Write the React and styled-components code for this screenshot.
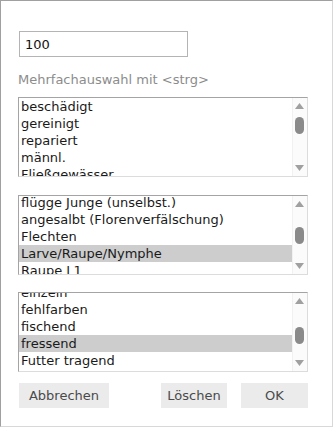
import styled, { createGlobalStyle } from 'styled-components';

const GlobalStyle = createGlobalStyle`
  html, body {
    margin: 0;
    padding: 0;
    background: #ffffff;
  }
  body {
    font-family: 'DejaVu Sans', Verdana, sans-serif;
    font-size: 13px;
    color: #1a1a1a;
  }
`;

const Panel = styled.div`
  box-sizing: border-box;
  width: 333px;
  height: 427px;
  border: 1px solid #a0a0a0;
  border-right-color: #d8d8d8;
  border-bottom-color: #d8d8d8;
  padding: 30px 24px 0 17px;
  display: flex;
  flex-direction: column;
`;

const NumberInput = styled.input`
  box-sizing: border-box;
  width: 169px;
  height: 26px;
  margin-left: 1px;
  border: 1px solid #b4b4b4;
  padding: 0 5px;
  font-family: inherit;
  font-size: 13px;
  color: #111;
  outline: none;
`;

const Hint = styled.div`
  margin-top: 14px;
  line-height: 17px;
  color: #8c8c8c;
`;

const ListBox = styled.div`
  box-sizing: border-box;
  height: 80px;
  margin-top: ${(p) => p.$gap}px;
  border: 1px solid #a4a4a4;
  border-right-color: #dcdcdc;
  border-bottom-color: #dcdcdc;
  display: flex;
  overflow: hidden;
`;

const Items = styled.div`
  flex: 1;
  overflow: hidden;
`;

const ItemsInner = styled.div`
  margin-top: ${(p) => -p.$scroll}px;
`;

const Item = styled.div`
  height: 17px;
  line-height: 17px;
  padding-left: 2px;
  white-space: nowrap;
  background: ${(p) => (p.$selected ? '#cdcdcd' : 'transparent')};
`;

const ScrollBar = styled.div`
  position: relative;
  width: 14px;
  background: #fbfbfb;
  border-left: 1px solid #f1f1f1;
`;

const Arrow = styled.svg`
  position: absolute;
  left: 2px;
  ${(p) => (p.$down ? 'bottom: 5px;' : 'top: 5px;')}
`;

const Thumb = styled.div`
  position: absolute;
  left: 2px;
  width: 9px;
  height: 17px;
  border-radius: 5px;
  background: #8a8a8a;
`;

const Buttons = styled.div`
  margin-top: 11px;
  display: flex;
  align-items: center;
  gap: 14px;
  padding-left: 1px;
`;

const Button = styled.button`
  box-sizing: border-box;
  height: 25px;
  width: ${(p) => p.$width}px;
  padding: 0;
  border: none;
  background: #ebebeb;
  color: #4a4a4a;
  font-family: inherit;
  font-size: 13px;
  text-align: center;
  margin-right: ${(p) => (p.$push ? 'auto' : '0')};
`;

const lists = [
  {
    gap: 9,
    scroll: 0,
    thumb: 19,
    items: ['beschädigt', 'gereinigt', 'repariert', 'männl.', 'Fließgewässer'],
  },
  {
    gap: 18,
    scroll: 2,
    thumb: 31,
    selected: 3,
    items: [
      'flügge Junge (unselbst.)',
      'angesalbt (Florenverfälschung)',
      'Flechten',
      'Larve/Raupe/Nymphe',
      'Raupe L1',
    ],
  },
  {
    gap: 17,
    scroll: 9,
    thumb: 34,
    selected: 3,
    items: ['einzeln', 'fehlfarben', 'fischend', 'fressend', 'Futter tragend'],
  },
];

const Select = ({ list }) => (
  <ListBox $gap={list.gap}>
    <Items>
      <ItemsInner $scroll={list.scroll}>
        {list.items.map((it, i) => (
          <Item key={it} $selected={i === list.selected}>
            {it}
          </Item>
        ))}
      </ItemsInner>
    </Items>
    <ScrollBar>
      <Arrow width='9' height='6' viewBox='0 0 9 6'>
        <path d='M4.5 0 L9 6 L0 6 Z' fill='#a0a0a0' />
      </Arrow>
      <Thumb style={{ top: list.thumb }} />
      <Arrow $down width='9' height='6' viewBox='0 0 9 6'>
        <path d='M0 0 L9 0 L4.5 6 Z' fill='#a0a0a0' />
      </Arrow>
    </ScrollBar>
  </ListBox>
);

const App = () => (
  <>
    <GlobalStyle />
    <Panel>
      <NumberInput defaultValue='100' />
      <Hint>Mehrfachauswahl mit &lt;strg&gt;</Hint>
      {lists.map((l, i) => (
        <Select key={i} list={l} />
      ))}
      <Buttons>
        <Button $push $width={90}>Abbrechen</Button>
        <Button $width={66}>Löschen</Button>
        <Button $width={67}>OK</Button>
      </Buttons>
    </Panel>
  </>
);

export default App;
